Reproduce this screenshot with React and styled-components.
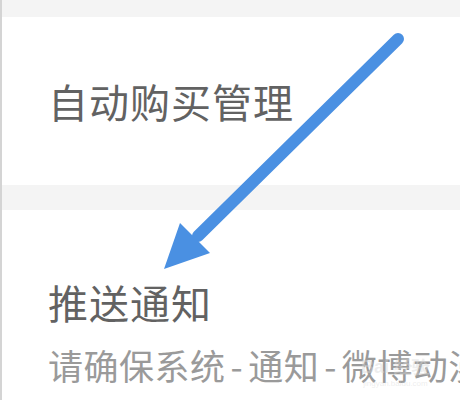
import React from 'react'
import styled, { createGlobalStyle } from 'styled-components'

const Global = createGlobalStyle`
  body {
    margin: 0;
    background: #ffffff;
    font-family: "Noto Sans CJK SC", "Noto Sans", sans-serif;
  }
`

const Page = styled.div`
  position: relative;
  width: 460px;
  height: 400px;
  overflow: hidden;
  border-left: 2px solid #d4d4d4;
  box-sizing: border-box;
  background: #ffffff;
`

const Band = styled.div`
  height: ${p => p.h}px;
  background: #f4f4f4;
`

const Section = styled.div`
  display: flex;
  flex-direction: column;
  justify-content: ${p => (p.center ? 'center' : 'flex-start')};
  height: ${p => (p.h ? `${p.h}px` : 'auto')};
  padding: ${p => p.pad || '0'} 0 0 46px;
  background: #ffffff;
`

const Title = styled.div`
  font-size: 40px;
  line-height: 40px;
  letter-spacing: 1px;
  color: #626262;
  white-space: nowrap;
`

const Sub = styled.div`
  margin-top: 25px;
  font-size: 35px;
  line-height: 36px;
  letter-spacing: 0.5px;
  color: #9a9a9a;
  white-space: nowrap;
`

const Dash = styled.span`
  margin: 0 5px;
`

const Arrow = styled.svg`
  position: absolute;
  left: 0;
  top: 0;
  pointer-events: none;
`

const Watermark = styled.div`
  position: absolute;
  right: 30px;
  bottom: 12px;
  display: flex;
  flex-direction: column;
  align-items: center;
  color: rgba(215, 215, 215, 0.45);
  font-family: "Liberation Sans", sans-serif;
  pointer-events: none;
`

const WmMain = styled.span`
  font-size: 18px;
  font-weight: bold;
`

const WmSmall = styled.span`
  font-size: 8px;
`

export default function App() {
  return (
    <>
      <Global />
      <Page>
        <Band h={17} />
        <Section h={168} center>
          <Title>自动购买管理</Title>
        </Section>
        <Band h={25} />
        <Section pad="72px">
          <Title>推送通知</Title>
          <Sub>
            请确保系统<Dash>-</Dash>通知<Dash>-</Dash>微博动漫
          </Sub>
        </Section>
        <Watermark>
          <WmMain>Bai 经验</WmMain>
          <WmSmall>jingyan.baidu.com</WmSmall>
        </Watermark>
        <Arrow width="460" height="400" viewBox="0 0 460 400">
          <line x1="396" y1="39" x2="196" y2="236" stroke="#4a90e2" strokeWidth="12" strokeLinecap="round" />
          <polygon points="178,223 208,253 162,269" fill="#4a90e2" />
        </Arrow>
      </Page>
    </>
  )
}
